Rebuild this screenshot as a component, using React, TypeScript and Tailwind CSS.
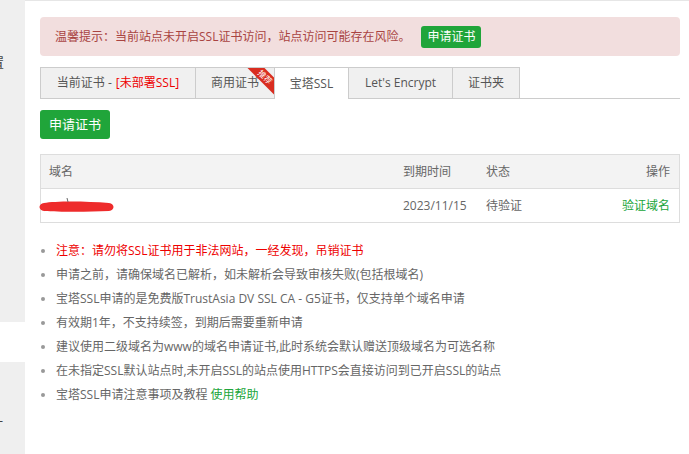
export default function App() {
  const tips: { text: React.ReactNode; red?: boolean }[] = [
    { text: "注意：请勿将SSL证书用于非法网站，一经发现，吊销证书", red: true },
    { text: "申请之前，请确保域名已解析，如未解析会导致审核失败(包括根域名)" },
    { text: "宝塔SSL申请的是免费版TrustAsia DV SSL CA - G5证书，仅支持单个域名申请" },
    { text: "有效期1年，不支持续签，到期后需要重新申请" },
    { text: "建议使用二级域名为www的域名申请证书,此时系统会默认赠送顶级域名为可选名称" },
    { text: "在未指定SSL默认站点时,未开启SSL的站点使用HTTPS会直接访问到已开启SSL的站点" },
    {
      text: (
        <>
          宝塔SSL申请注意事项及教程 <span className="text-[#20a53a]">使用帮助</span>
        </>
      ),
    },
  ];

  return (
    <div
      className="flex w-[689px] h-[454px] bg-white overflow-hidden text-[12px] text-[#666]"
      style={{ fontFamily: '"Open Sans", "Noto Sans CJK SC", sans-serif' }}
    >
      {/* sidebar edge */}
      <div className="w-[25px] shrink-0 flex flex-col overflow-hidden">
        <div className="h-[322px] bg-[#efefef] pt-[53px]">
          <div className="-ml-[9px] text-[13px] text-[#444] leading-[18px]">置</div>
        </div>
        <div className="h-[40px] bg-white" />
        <div className="flex-1 bg-[#efefef] pt-[50px]">
          <div className="-ml-[10px] text-[13px] text-[#444] leading-[18px]">一</div>
        </div>
      </div>

      <div className="flex-1 border-t border-[#e6e6e6] pt-[16px] pl-[15px] pr-[9px]">
        {/* alert */}
        <div className="h-[39px] rounded-[4px] bg-[#f2dede] flex items-center pl-[15px] text-[#a94442]">
          <span>温馨提示：当前站点未开启SSL证书访问，站点访问可能存在风险。</span>
          <button className="ml-[11px] h-[22px] px-[6px] rounded-[3px] bg-[#20a53a] text-white text-[12px] leading-[22px]">
            申请证书
          </button>
        </div>

        {/* tabs */}
        <div className="mt-[11px] flex border-b border-[#ccc] h-[32px]">
          <div className="w-[156px] h-[32px] bg-[#f0f0f0] border border-[#ccc] flex items-center justify-center text-[#555]">
            当前证书 - <span className="ml-[4px] text-[#e00]">[未部署SSL]</span>
          </div>
          <div className="relative w-[79px] h-[32px] bg-[#f0f0f0] border border-l-0 border-[#ccc] flex items-center justify-center text-[#555] overflow-hidden">
            商用证书
            <div className="absolute -right-[16px] top-[3px] w-[50px] h-[12px] bg-[#d92d20] rotate-45 flex items-center justify-center text-white text-[8px] leading-none">
              推荐
            </div>
          </div>
          <div className="w-[74px] h-[32px] bg-white border border-l-0 border-b-0 border-[#ccc] flex items-center justify-center text-[#555]">
            宝塔SSL
          </div>
          <div className="w-[104px] h-[32px] bg-[#f0f0f0] border border-l-0 border-[#ccc] flex items-center justify-center text-[#555]">
            Let's Encrypt
          </div>
          <div className="w-[67px] h-[32px] bg-[#f0f0f0] border border-l-0 border-[#ccc] flex items-center justify-center text-[#555]">
            证书夹
          </div>
        </div>

        {/* apply button */}
        <button className="mt-[11px] h-[29px] w-[70px] rounded-[3px] bg-[#20a53a] text-white text-[13px]">
          申请证书
        </button>

        {/* table */}
        <div className="mt-[15px] border border-[#ddd]">
          <div className="h-[34px] bg-[#f3f3f3] border-b border-[#ddd] flex items-center px-[8px]">
            <div className="flex-1">域名</div>
            <div className="w-[83px]">到期时间</div>
            <div className="w-[60px]">状态</div>
            <div className="w-[125px] text-right pr-[1px]">操作</div>
          </div>
          <div className="relative h-[33px] flex items-center px-[8px]">
            <div className="flex-1" />
            <div className="w-[83px]">2023/11/15</div>
            <div className="w-[60px]">待验证</div>
            <div className="w-[125px] text-right pr-[1px] text-[#20a53a]">验证域名</div>
            <svg className="absolute left-[-2px] top-[9px]" width="76" height="16" viewBox="0 0 76 16">
              <path d="M5 5 C16 3, 46 3, 70 5 C76 6, 76 12, 70 13 C50 14, 20 14, 5 13 C-1 12, -1 6, 5 5 Z" fill="#ee2b2b" />
              <path d="M28 0 L29 4" stroke="#666" strokeWidth="1" />
            </svg>
          </div>
        </div>

        {/* tips */}
        <ul className="mt-[16px]">
          {tips.map((t, i) => (
            <li key={i} className="h-[24px] flex items-center">
              <span className="w-[4px] h-[4px] rounded-full bg-[#999] ml-[1px] mr-[11px]" />
              <span className={t.red ? "text-[#e00]" : "text-[#666]"}>{t.text}</span>
            </li>
          ))}
        </ul>
      </div>
    </div>
  );
}
